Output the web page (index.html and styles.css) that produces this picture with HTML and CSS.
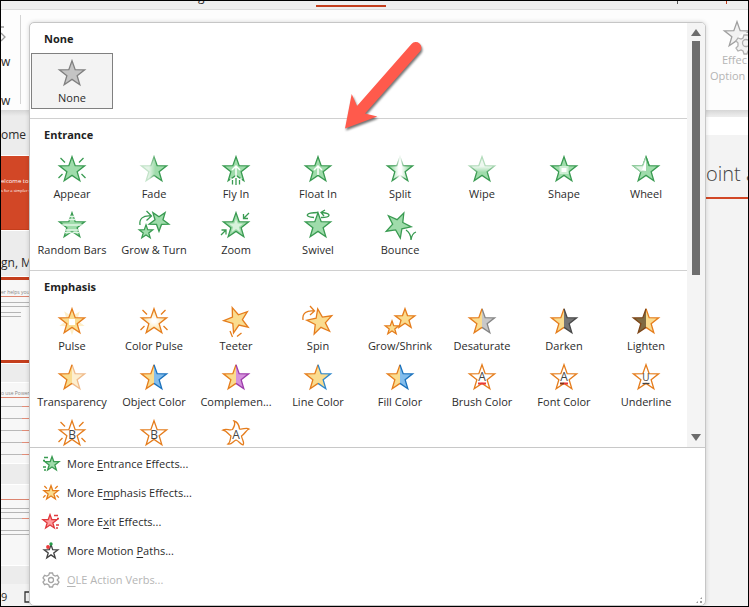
FILE: index.html
```html
<!DOCTYPE html>
<html lang="en">
<head>
<meta charset="utf-8">
<title>Add Animation</title>
<link rel="stylesheet" href="styles.css">
</head>
<body>
<svg class="defs" width="0" height="0" aria-hidden="true">
  <defs>
    <path id="star" d="M0-13.3 3.17-4.37 12.65-4.11 5.14 1.67 7.82 10.76 0 5.4-7.82 10.76-5.14 1.67-12.65-4.11-3.17-4.37Z"/>
    <path id="half-l" d="M0-13.3-3.17-4.37-12.65-4.11-5.14 1.67-7.82 10.76 0 5.4"/>
    <path id="half-r" d="M0-13.3 3.17-4.37 12.65-4.11 5.14 1.67 7.82 10.76 0 5.4"/>
    <path id="rays" d="M-11.5-12-7-7.5M11.5-12 7-7.5M-13.5 8-9.5 4M13.5 8 9.5 4"/>
    <clipPath id="star-clip"><path d="M0-15 4-5 14-5 6 2 9 12 0 6-9 12-6 2-14-5-4-5Z"/></clipPath>
    <linearGradient id="fade-fill"><stop offset=".3" stop-color="#e4f4e7"/><stop offset=".55" stop-color="#9fdcab"/></linearGradient>
    <linearGradient id="fade-line" gradientUnits="userSpaceOnUse" x1="-12" y1="0" x2="12" y2="0"><stop offset=".3" stop-color="#c3e3c9"/><stop offset=".6" stop-color="#3a9b52"/></linearGradient>
    <linearGradient id="split-fill"><stop offset=".15" stop-color="#9fdcab"/><stop offset=".45" stop-color="#fff"/><stop offset=".55" stop-color="#fff"/><stop offset=".85" stop-color="#9fdcab"/></linearGradient>
    <linearGradient id="split-line" gradientUnits="userSpaceOnUse" x1="-12" y1="0" x2="12" y2="0"><stop offset=".3" stop-color="#3a9b52"/><stop offset=".5" stop-color="#fff"/><stop offset=".7" stop-color="#3a9b52"/></linearGradient>
    <linearGradient id="wipe-fill" x2="0" y2="1"><stop offset=".4" stop-color="#eef8f0"/><stop offset=".65" stop-color="#9fdcab"/></linearGradient>
    <linearGradient id="wipe-line" gradientUnits="userSpaceOnUse" x1="0" y1="-13" x2="0" y2="11"><stop offset=".35" stop-color="#b4dcbc"/><stop offset=".7" stop-color="#3a9b52"/></linearGradient>
    <radialGradient id="glow"><stop offset=".15" stop-color="#fff"/><stop offset="1" stop-color="#fadc8f"/></radialGradient>
  </defs>
</svg>

<div class="app">
  <div class="tabs"><span class="tab-rest">g</span><span class="tab-active"></span><span class="mark"></span><span class="mark mark-red"></span></div>

  <div class="ribbon">
    <div class="preview">
      <svg width="6" height="20" viewBox="0 0 6 20"><path d="M0 3 3 3M0 9 4 13 0 17" fill="none" stroke="#9a9a9a"/></svg>
      <span>w</span><span>w</span>
    </div>
    <div class="effect">
      <svg width="38" height="32" viewBox="-14 -15 38 32"><use href="#star" class="effect-star"/>
        <circle cx="9" cy="7" r="9" fill="#fdfdfd"/><path class="effect-gear" d="M7 0h4l1 3 3 1 3-1 2 4-3 2v2l2 2-3 3-3-1-2 1-1 3H7l-1-3-2-1-3 1-2-3 2-2V8l-2-2 2-3 3 1 2-1Z"/><circle class="effect-gear" cx="9" cy="8" r="3.5"/></svg>
      <span>Effec</span><span>Option</span>
    </div>
  </div>

  <div class="workspace">
    <div class="thumbs">
      <p class="thumb-head">ome</p>
      <div class="thumb thumb-title"><b>elcome to</b><i>s for a simpler way</i></div>
      <p class="thumb-head">gn, M</p>
      <div class="thumb thumb-band"><b>er helps you get</b><hr><span class="lines"></span><span class="lines short"></span></div>
      <div class="thumb thumb-page"><b>o use PowerPoin</b><hr><span class="rule"></span><span class="rule"></span><span class="rule"></span><span class="rule"></span><span class="rule"></span></div>
      <div class="thumb thumb-page last"><b></b><hr><span class="lines"></span><span class="rule"></span><span class="lines"></span></div>
    </div>
    <div class="slide"><h1>oint a</h1></div>
  </div>

  <div class="status"><span>9</span><svg width="8" height="12" viewBox="0 0 8 12"><path d="M8 1H1v10h7" fill="none" stroke="#333" stroke-width="1.3"/></svg></div>

  <div class="panel">
    <div class="gallery">
      <div class="sections">
        <section>
          <h2>None</h2>
          <div class="grid">
            <button class="tile selected"><svg viewBox="-20 -20 40 36"><use href="#star" fill="#c4c4c4" stroke="#808080"/></svg><span>None</span></button>
          </div>
        </section>

        <section>
          <h2>Entrance</h2>
          <div class="grid green">
            <button class="tile"><svg viewBox="-20 -20 40 36"><use href="#star"/><use href="#rays"/></svg><span>Appear</span></button>
            <button class="tile"><svg viewBox="-20 -20 40 36"><use href="#star" fill="url(#fade-fill)" stroke="url(#fade-line)"/></svg><span>Fade</span></button>
            <button class="tile"><svg viewBox="-20 -20 40 36"><use href="#star"/><path class="light" d="M0 7V-4M-4 0 0-4 4 0"/><path class="cut" d="M-5 8v6M5 8v6"/><path d="M-3.5 10v4.500M0 8v7M3.500 10v4.500"/></svg><span>Fly In</span></button>
            <button class="tile"><svg viewBox="-20 -20 40 36"><use href="#star"/><path class="light" d="M0 5V-4M-4 0 0-4 4 0"/></svg><span>Float In</span></button>
            <button class="tile"><svg viewBox="-20 -20 40 36"><use href="#star" fill="url(#split-fill)" stroke="url(#split-line)"/></svg><span>Split</span></button>
            <button class="tile"><svg viewBox="-20 -20 40 36"><use href="#star" fill="url(#wipe-fill)" stroke="url(#wipe-line)"/></svg><span>Wipe</span></button>
            <button class="tile"><svg viewBox="-20 -20 40 36"><use href="#star"/><rect class="plain" x="-4.500" y="-4" width="9" height="8" fill="#cdeed3"/><rect class="plain" x="-2.500" y="-2" width="5" height="4" fill="#fff"/></svg><span>Shape</span></button>
            <button class="tile"><svg viewBox="-20 -20 40 36"><use href="#star"/><path d="M0-13.300-3.170-4.370-12.650-4.110-5.140 1.670 0 1Z" fill="#e4f5e7" stroke="#9fd3aa"/><path class="plain" d="M-4 0 0 1V-11Z" fill="#fff"/><path d="M0-13.300 3.170-4.370"/></svg><span>Wheel</span></button>
            <button class="tile"><svg viewBox="-20 -20 40 36"><use href="#star"/><path class="bars" clip-path="url(#star-clip)" d="M-14-9.500h28M-14-6.500h28M-14-1h28M-14 4h28M-14 6.500h28"/></svg><span>Random Bars</span></button>
            <button class="tile"><svg viewBox="-20 -20 40 36"><use href="#star" transform="translate(-8 6) scale(.54)" stroke-width="2.300"/><use href="#star" transform="translate(5 -5) rotate(36) scale(.78)" stroke-width="1.700"/><path d="M-14-1C-15-7-11-11-3-10M-7.500-15-2.500-10-7.500-5.500"/></svg><span>Grow &amp; Turn</span></button>
            <button class="tile"><svg viewBox="-20 -20 40 36"><use href="#star"/><use href="#star" class="plain" transform="scale(.55)" fill="#d8f2dc"/><path d="M13-13 7.500-7.500M7.500-12v4.500H12M-15 9-10 4M-14.500 4h4.500v4.500"/></svg><span>Zoom</span></button>
            <button class="tile"><svg viewBox="-20 -20 40 36"><use href="#star"/><path d="M-4-8.500C-14-9-13-13.500 0-13.500M4-13.500C14-12.500 13-8.500 3-8.500M7-16 3-13.500 6-10"/></svg><span>Swivel</span></button>
            <button class="tile"><svg viewBox="-20 -20 40 36"><use href="#star" transform="translate(-2 -1) rotate(26)"/><path d="M6 4C9 6 11 9 11 14 11.500 10 13 7 16 6"/></svg><span>Bounce</span></button>
          </div>
        </section>

        <section>
          <h2>Emphasis</h2>
          <div class="grid orange">
            <button class="tile"><svg viewBox="-20 -20 40 36"><use href="#star" class="plain" transform="rotate(36)" fill="#fdeec8"/><use href="#star"/><rect class="plain" x="-3" y="-3" width="6" height="6" fill="#fff"/></svg><span>Pulse</span></button>
            <button class="tile"><svg viewBox="-20 -20 40 36"><use href="#star" fill="url(#glow)"/><use href="#rays"/></svg><span>Color Pulse</span></button>
            <button class="tile"><svg viewBox="-20 -20 40 36"><use href="#star" transform="translate(1 -2) rotate(-21)"/><path d="M-6 9-3.500 15M5.500 11 1 14.500"/></svg><span>Teeter</span></button>
            <button class="tile"><svg viewBox="-20 -20 40 36"><use href="#star" transform="translate(2 0) rotate(-10)"/><path d="M-15-2C-16-9-11-12-4-11M-8-16-3.500-11-8-7"/></svg><span>Spin</span></button>
            <button class="tile"><svg viewBox="-20 -20 40 36"><use href="#star" transform="translate(-8 6) scale(.54)" stroke-width="2.300"/><use href="#star" transform="translate(5 -3) scale(.78)" stroke-width="1.700"/></svg><span>Grow/Shrink</span></button>
            <button class="tile"><svg viewBox="-20 -20 40 36"><use href="#half-r" fill="#c8c8c8" stroke="#858585"/><use href="#half-l"/></svg><span>Desaturate</span></button>
            <button class="tile"><svg viewBox="-20 -20 40 36"><use href="#half-l"/><use href="#half-r" fill="#757575" stroke="#484848"/></svg><span>Darken</span></button>
            <button class="tile"><svg viewBox="-20 -20 40 36"><use href="#half-r"/><use href="#half-l" fill="#806b42" stroke="#7d4516"/></svg><span>Lighten</span></button>
            <button class="tile"><svg viewBox="-20 -20 40 36"><use href="#half-r" fill="#fdefcf" stroke="#f0bb8b"/><use href="#half-l"/></svg><span>Transparency</span></button>
            <button class="tile"><svg viewBox="-20 -20 40 36"><use href="#half-l"/><use href="#half-r" fill="#83bdec" stroke="#1b72bd"/></svg><span>Object Color</span></button>
            <button class="tile"><svg viewBox="-20 -20 40 36"><use href="#half-l"/><use href="#half-r" fill="#d492dc" stroke="#9d3cab"/></svg><span>Complemen...</span></button>
            <button class="tile"><svg viewBox="-20 -20 40 36"><use href="#half-l"/><use href="#half-r" stroke="#2f88cc"/></svg><span>Line Color</span></button>
            <button class="tile"><svg viewBox="-20 -20 40 36"><use href="#half-l"/><use href="#half-r" fill="#83bdec" stroke="#1b72bd"/></svg><span>Fill Color</span></button>
            <button class="tile"><svg viewBox="-20 -20 40 36"><use href="#star" fill="#fff"/><text y="3">A</text><path d="M-4 5.500h8" stroke="#ea3a3a" stroke-width="2"/></svg><span>Brush Color</span></button>
            <button class="tile"><svg viewBox="-20 -20 40 36"><use href="#star" fill="#fff"/><text y="3">A</text><path d="M-4 5.500h4" stroke="#8a3318" stroke-width="2"/><path d="M0 5.500h4" stroke="#ea3a3a" stroke-width="2"/></svg><span>Font Color</span></button>
            <button class="tile"><svg viewBox="-20 -20 40 36"><use href="#star" fill="#fff"/><text y="3" class="small">U</text><path d="M-3.500 5.500h7" stroke="#444"/></svg><span>Underline</span></button>
            <button class="tile" aria-label="Bold Flash"><svg viewBox="-20 -20 40 36"><use href="#star" fill="#fff"/><use href="#rays"/><text y="5">B</text></svg></button>
            <button class="tile" aria-label="Bold Reveal"><svg viewBox="-20 -20 40 36"><use href="#star" fill="#fff"/><text y="5">B</text></svg></button>
            <button class="tile" aria-label="Wave"><svg viewBox="-20 -20 40 36"><path fill="#fff" d="M-2-13C2-12 3-9 3.500-5 7-4 10-7 13-5 10-4 9 0 5.500 2 6 6 9 8 7 11 4 10 3 7 0 6-3 7-4 11-8 10-5 8-6 5-5 2-8 0-9-3-13-4-9-6-7-3-3.500-4.500-2-7 0-10-2-13Z"/><text y="5">A</text></svg></button>
          </div>
        </section>
      </div>
      <div class="scrollbar" aria-hidden="true"><i class="up"></i><i class="thumb-bar"></i><i class="down"></i></div>
    </div>

    <div class="more">
      <button class="green"><svg viewBox="-9 -9 18 18"><use href="#star" transform="translate(1 0) scale(.56)" stroke-width="2.300"/><path d="M-7-6.500h4M-8-3.500h2M-8 3h3M-7 6h2"/></svg><span>More <u>E</u>ntrance Effects...</span></button>
      <button class="orange"><svg viewBox="-9 -9 18 18"><use href="#star" transform="scale(.56)" stroke-width="2.300"/><use href="#rays" transform="scale(.58)" stroke-width="2.300"/></svg><span>More E<u>m</u>phasis Effects...</span></button>
      <button class="red"><svg viewBox="-9 -9 18 18"><use href="#star" transform="translate(-1 0) scale(.56)" stroke-width="2.300"/><path d="M3-6.500h4M6-3.500h2M5 3h3M5 6h2"/></svg><span>More E<u>x</u>it Effects...</span></button>
      <button class="dark"><svg viewBox="-9 -9 18 18"><use href="#star" transform="translate(0 1) scale(.54)" stroke-width="2.500"/><circle class="plain" cy="-7" r="1.700" fill="#259b48"/><circle class="plain" cx="-3" cy="-4" r="1.900" fill="#ea3a3a"/></svg><span>More Motion <u>P</u>aths...</span></button>
      <button class="dim" disabled><svg viewBox="-9 -9 18 18"><path d="M-1.500-7h3l.7 2 2 1 2.200-.7L8-2 6.200 0 8 2 6.400 4.700 4.200 4l-2 1-.7 2h-3l-.7-2-2-1-2.200.7L-8 2-6.200 0-8-2l1.600-2.700L-4.200-4l2-1Z"/><circle r="2.500"/></svg><span><u>O</u>LE Action Verbs...</span></button>
      <i class="grip"></i>
    </div>
  </div>

  <svg class="pointer" width="90" height="100" viewBox="340 38 90 100" aria-hidden="true"><path d="M345 128.500 351.700 94 357 106 411.500 44A5.500 5.500 0 0 1 420 51.500L365 113.500 377.300 116.500Z"/></svg>
</div>
</body>
</html>
```
FILE: styles.css
```css
* { box-sizing: border-box; }

body {
  margin: 0;
  font: 11px/16px "Open Sans", "Noto Sans", sans-serif;
  color: #2b2b2b;
}

.defs { position: absolute; }

.app {
  position: relative;
  display: flex;
  flex-direction: column;
  height: 100vh;
  min-height: 600px;
  border: 1px solid #000;
  overflow: hidden;
  background: #ececec;
}

.tabs {
  display: flex;
  flex: none;
  height: 9px;
  overflow: hidden;
  background: #efefef;
  border-bottom: 1px solid #dcdcdc;
}
.tab-rest { width: 7px; margin-left: 197px; margin-top: -12px; font-size: 12px; }
.tab-active { width: 70px; height: 2px; margin: 4px auto 0 111px; background: #c43e1c; }
.mark { width: 1px; height: 3px; margin-right: 48px; background: #555; }
.mark-red { margin-right: 21px; background: #c43e1c; }

.ribbon {
  display: flex;
  flex: none;
  justify-content: space-between;
  height: 100px;
  background: #fdfdfd;
}
.preview {
  display: flex;
  flex-direction: column;
  width: 20px;
  height: 89px;
  margin-top: 5px;
  padding-top: 9px;
  border-right: 1px solid #d4d4d4;
  font-size: 12px;
}
.preview svg { margin-bottom: 10px; }
.preview span { margin-bottom: 23px; }
.effect {
  display: flex;
  flex-direction: column;
  width: 42px;
  padding-top: 10px;
  padding-left: 4px;
  overflow: hidden;
  color: #b4b4b4;
}
.effect svg { flex: none; align-self: flex-start; margin-left: 13px; }
.effect span { padding-left: 12px; }
.effect span:last-child { padding-left: 0; }
.effect-star { fill: #f2f2f2; stroke: #a0a0a0; }
.effect-gear { fill: #f2f2f2; stroke: #b0b0b0; }

.workspace {
  display: flex;
  flex: 1;
  justify-content: space-between;
  min-height: 0;
  background: linear-gradient(#d6d6d6, #ececec 6px);
}
.thumbs { width: 28px; padding-top: 15px; overflow: hidden; white-space: nowrap; }
.thumb-head { margin: 0 0 11px; height: 20px; font-size: 12px; line-height: 20px; }
.thumb { margin-bottom: 20px; overflow: hidden; background: #f7f7f7; outline: 1px solid #fff; }
.thumb b, .thumb i { display: block; font-style: normal; font-weight: 400; }
.thumb hr { height: 1px; margin: 0 0 8px; border: 0; background: #dc8570; }
.thumb-title {
  height: 74px;
  padding-top: 20px;
  background: #d24726;
  border-bottom: 1px solid #c43e1c;
  color: #fff;
  font-size: 6px;
  line-height: 10px;
}
.thumb-title i { font-size: 4px; }
.thumb-title + .thumb-head { margin-bottom: 7px; padding-top: 3px; }
.thumb-band {
  height: 86px;
  padding-top: 8px;
  border-top: 3px solid #c43e1c;
  border-bottom: 3px solid #c43e1c;
  color: #888;
  font-size: 5px;
  line-height: 8px;
}
.thumb-band hr { margin-bottom: 5px; }
.thumb-page { height: 80px; padding-top: 6px; margin-bottom: 22px; color: #888; font-size: 5px; line-height: 8px; }
.thumb-page b { height: 8px; }
.lines { display: block; height: 5px; margin-bottom: 5px; border: 1px solid #b5b5b5; border-width: 1px 0; }
.rule { display: block; height: 1px; margin-bottom: 11px; background: linear-gradient(90deg, #b9b9b9 75%, #e38d78 75%); }
.short { width: 20px; }
.slide {
  width: 42px;
  margin-top: 7px;
  padding-top: 18px;
  overflow: hidden;
  background: linear-gradient(#fff 18px, #f3f3f3 18px);
  white-space: nowrap;
}
.slide h1 {
  height: 64px;
  margin: 0;
  padding-top: 22px;
  border-bottom: 2px solid #d24726;
  font: 300 20px/34px "Open Sans", sans-serif;
  color: #444;
}

.status {
  display: flex;
  flex: none;
  align-items: center;
  gap: 17px;
  height: 22px;
  padding-top: 4px;
  background: #f3f3f3;
}

.panel {
  position: absolute;
  inset: 21px 42px 0 28px;
  display: flex;
  flex-direction: column;
  background: #fff;
  border: 1px solid #c6c6c6;
  border-radius: 5px;
  box-shadow: 0 0 4px rgba(0, 0, 0, .16);
  overflow: hidden;
}
.gallery { display: flex; flex: 1; min-height: 0; border-bottom: 1px solid #c8c8c8; }
.sections { flex: 1; overflow: hidden; }
section { padding-bottom: 9px; border-bottom: 1px solid #d0d0d0; }
h2 { height: 30px; margin: 0; padding: 2px 14px 0; font-size: 11px; line-height: 28px; color: #222; }
.grid { display: grid; grid-template-columns: repeat(8, 82px); padding-left: 1px; }

button { border: 0; background: none; font: inherit; color: inherit; cursor: default; }
.tile { display: flex; flex-direction: column; align-items: center; height: 56px; padding: 1px 0 0; white-space: nowrap; }
.tile svg { flex: none; width: 40px; height: 36px; }
.selected { padding: 0; background: #f3f3f3; border: 1px solid #808080; }

svg { fill: none; stroke-width: 1.3; overflow: visible; }
.green svg { stroke: #3a9b52; }
.green use { fill: #9fdcab; }
.orange svg { stroke: #e57d1d; }
.orange use { fill: #fadc8f; }
.red svg { stroke: #e03a3e; }
.red use { fill: #ff9a9c; }
.dark svg { stroke: #444; }
.dark use { fill: #fff; }
.dim { color: #b5b5b5; }
.dim svg { stroke: #a5a5a5; }
.green use[fill], .orange use[fill] { fill: revert-layer; }
.plain { stroke: none; }
.light { stroke: #fff; stroke-width: 1.5; }
.cut { stroke: #fff; }
.bars { stroke: #e4f6e7; }
text { fill: #444; stroke: none; font: 12px "Open Sans", sans-serif; text-anchor: middle; }
.small { font-size: 10px; }

.scrollbar { display: flex; flex-direction: column; align-items: center; width: 18px; padding: 6px 0; background: #f4f4f4; }
.up, .down { border: 5px solid transparent; }
.up { border-top: 0; border-bottom: 7px solid #6c6c6c; }
.thumb-bar { width: 8px; height: 234px; margin: 5px 0 auto; background: #6e6e6e; }
.down { border-bottom: 0; border-top: 7px solid #6c6c6c; }

.more { position: relative; display: flex; flex-direction: column; padding: 1px 12px 11px; }
.more button { display: flex; align-items: center; gap: 7px; height: 29px; padding: 0; }
.more svg { width: 18px; height: 18px; }
.more u { text-underline-offset: 2px; }
.grip {
  position: absolute;
  right: 2px;
  bottom: 1px;
  width: 8px;
  height: 8px;
  background: radial-gradient(circle, #999 1px, transparent 1px) 0 0 / 4px 4px;
  clip-path: polygon(100% 0, 100% 100%, 0 100%);
}

.pointer { position: absolute; left: 339px; top: 37px; filter: drop-shadow(1px 2px 1px rgba(0, 0, 0, .55)); }
.pointer path { fill: #ff5a4c; }
```
